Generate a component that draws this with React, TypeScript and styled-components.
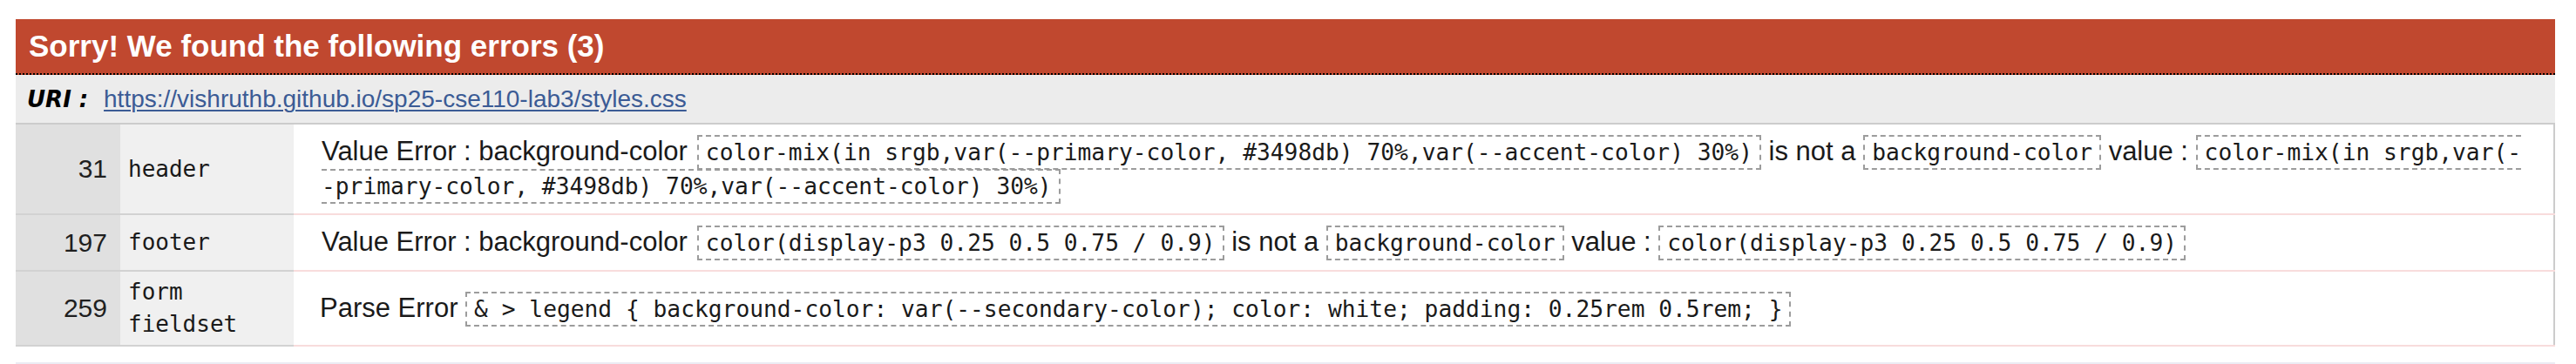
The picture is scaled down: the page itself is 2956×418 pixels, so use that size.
import React from "react";
import styled, { createGlobalStyle } from "styled-components";

const Global = createGlobalStyle`
  html, body { margin: 0; padding: 0; background: #ffffff; }
  body { font-family: "Liberation Sans", Arial, sans-serif; color: #1a1a1a; }
`;

const Page = styled.div`
  padding: 22px 24px 0 18px;
`;

const ErrorSection = styled.section`
  display: flex;
  flex-direction: column;
`;

const Heading = styled.h3`
  margin: 0;
  background: #c0482f;
  color: #ffffff;
  font: bold 35px/40px "Liberation Sans", Arial, sans-serif;
  padding: 11px 15px;
  border-bottom: 2px dotted #000000;
`;

const UriBar = styled.h4`
  margin: 0;
  background: #ececec;
  padding: 12px 13px 11px;
  font: normal 28px/32px "Liberation Sans", Arial, sans-serif;
  white-space: nowrap;
`;

const UriLabel = styled.span`
  font-family: "DejaVu Sans", "Liberation Sans", sans-serif;
  font-weight: bold;
  font-style: italic;
  font-size: 26px;
  color: #000000;
  margin-right: 10px;
`;

const UriLink = styled.a`
  color: #3b5b95;
  text-decoration: underline;
  text-decoration-thickness: 2px;
  text-underline-offset: 3px;
`;

const Table = styled.table`
  width: 100%;
  border-collapse: collapse;
  table-layout: fixed;
  border-top: 2px solid #cccccc;
  border-right: 2px solid #cccccc;
`;

const LineCell = styled.td`
  background: #e0e0e0;
  text-align: right;
  vertical-align: middle;
  padding: 0 15px 0 0;
  font: normal 30px/40px "Liberation Sans", Arial, sans-serif;
  color: #1f1f1f;
  border-bottom: 2px solid #d2d2d2;
`;

const ContextCell = styled.td`
  background: #f0f0f0;
  vertical-align: middle;
  padding: 5px 9px;
  font-family: "DejaVu Sans Mono", monospace;
  font-size: 26px;
  line-height: 37px;
  color: #1a1a1a;
  border-bottom: 2px solid #d2d2d2;
`;

const MessageCell = styled.td<{ $kind?: "parse" | "value" }>`
  background: #ffffff;
  vertical-align: middle;
  padding: 12px 32px 12px ${(p) => (p.$kind === "parse" ? "30px" : "32px")};
  font: normal 31px/38px "Liberation Sans", Arial, sans-serif;
  color: #1a1a1a;
  border-bottom: 2px solid #f8dcdc;
`;

const Property = styled.span`
  margin-right: 11px;
`;

const Code = styled.span`
  font-family: "DejaVu Sans Mono", monospace;
  font-size: 26.25px;
  border: 2px dashed #9c9c9c;
  padding: 3px 8px;
  color: #1a1a1a;
`;

const NextSection = styled.div`
  margin-top: 18px;
  border-top: 2px solid #ececf3;
`;

type ErrorRow = {
  line: number;
  context: string;
  kind: "parse" | "value";
  message: React.ReactNode;
};

const rows: ErrorRow[] = [
  {
    line: 31,
    context: "header",
    kind: "value",
    message: (
      <>
        Value Error : <Property>background-color</Property>
        <Code>color-mix(in srgb,var(--primary-color, #3498db) 70%,var(--accent-color) 30%)</Code> is not a{" "}
        <Code>background-color</Code> value :{" "}
        <Code>
          color-mix(in srgb,var(-
          <br />
          -primary-color, #3498db) 70%,var(--accent-color) 30%)
        </Code>
      </>
    ),
  },
  {
    line: 197,
    context: "footer",
    kind: "value",
    message: (
      <>
        Value Error : <Property>background-color</Property>
        <Code>color(display-p3 0.25 0.5 0.75 / 0.9)</Code> is not a <Code>background-color</Code> value :{" "}
        <Code>color(display-p3 0.25 0.5 0.75 / 0.9)</Code>
      </>
    ),
  },
  {
    line: 259,
    context: "form fieldset",
    kind: "parse",
    message: (
      <>
        Parse Error{" "}
        <Code>{"& > legend { background-color: var(--secondary-color); color: white; padding: 0.25rem 0.5rem; }"}</Code>
      </>
    ),
  },
];

export default function App() {
  return (
    <>
      <Global />
      <Page>
        <ErrorSection>
          <Heading>Sorry! We found the following errors (3)</Heading>
          <UriBar>
            <UriLabel>URI :</UriLabel>{" "}
            <UriLink href="#">https://vishruthb.github.io/sp25-cse110-lab3/styles.css</UriLink>
          </UriBar>
          <Table>
            <colgroup>
              <col style={{ width: 120 }} />
              <col style={{ width: 199 }} />
              <col />
            </colgroup>
            <tbody>
              {rows.map((r) => (
                <tr key={r.line}>
                  <LineCell>{r.line}</LineCell>
                  <ContextCell>{r.context}</ContextCell>
                  <MessageCell $kind={r.kind}>{r.message}</MessageCell>
                </tr>
              ))}
            </tbody>
          </Table>
        </ErrorSection>
        <NextSection />
      </Page>
    </>
  );
}
